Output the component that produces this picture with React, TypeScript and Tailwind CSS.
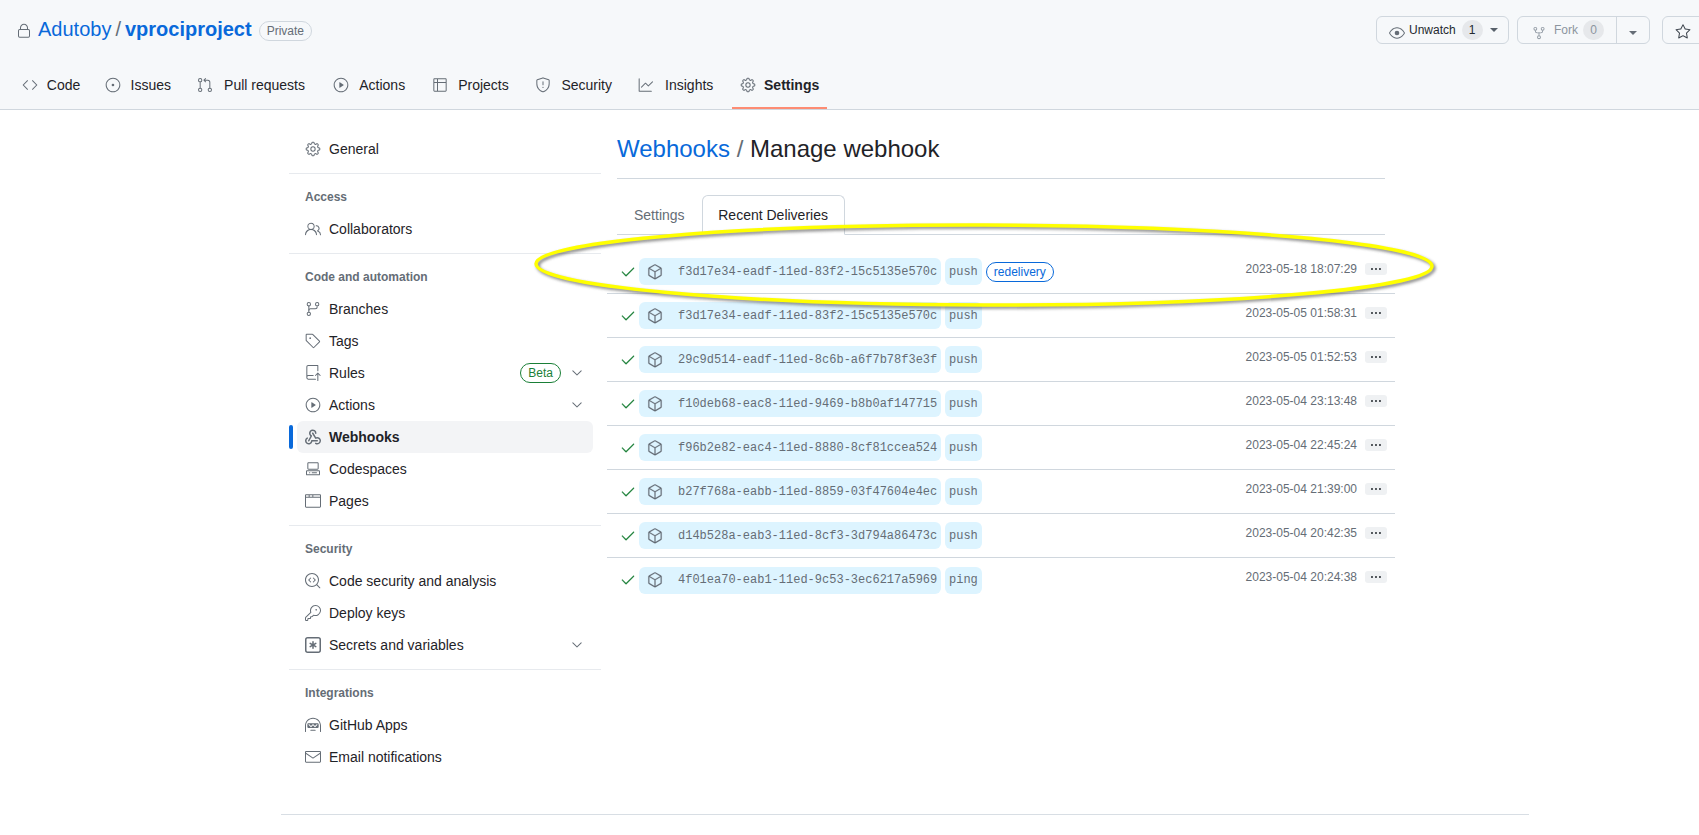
import type { ReactNode } from "react";
import {
  GoBrowser,
  GoCheck,
  GoChevronDown,
  GoCode,
  GoCodescan,
  GoCodespaces,
  GoEye,
  GoGear,
  GoGitBranch,
  GoGitPullRequest,
  GoGraph,
  GoHubot,
  GoIssueOpened,
  GoKebabHorizontal,
  GoKey,
  GoLock,
  GoMail,
  GoPackage,
  GoPeople,
  GoPlay,
  GoRepoForked,
  GoRepoPush,
  GoShield,
  GoStar,
  GoTable,
  GoTag,
} from "react-icons/go";

// these two are missing from the icon package
const WebhookIcon = () => (
  <svg width="16" height="16" viewBox="0 0 16 16" fill="currentColor">
    <path d="M5.5 4.25a2.25 2.25 0 0 1 4.5 0 .75.75 0 0 0 1.5 0 3.75 3.75 0 1 0-6.14 2.889l-2.272 4.258a.75.75 0 0 0 1.324.706L7 7.25a.75.75 0 0 0-.309-1.015A2.25 2.25 0 0 1 5.5 4.25Z" />
    <path d="M7.364 3.607a.75.75 0 0 1 1.03.257l2.608 4.349a3.75 3.75 0 1 1-.628 6.785.75.75 0 0 1 .752-1.299 2.25 2.25 0 1 0-.033-3.88.75.75 0 0 1-1.03-.256L7.107 4.636a.75.75 0 0 1 .257-1.03Z" />
    <path d="M2.9 8.776A.75.75 0 0 1 2.625 9.8 2.25 2.25 0 1 0 6 11.75a.75.75 0 0 1 .75-.751h5.5a.75.75 0 0 1 0 1.5H7.425a3.751 3.751 0 1 1-5.55-3.998.75.75 0 0 1 1.024.274Z" />
  </svg>
);

const KeyAsteriskIcon = () => (
  <svg width="16" height="16" viewBox="0 0 16 16" fill="currentColor">
    <path d="M0 2.75A2.75 2.75 0 0 1 2.75 0h10.5A2.75 2.75 0 0 1 16 2.75v10.5A2.75 2.75 0 0 1 13.25 16H2.75A2.75 2.75 0 0 1 0 13.25ZM2.75 1.5c-.69 0-1.25.56-1.25 1.25v10.5c0 .69.56 1.25 1.25 1.25h10.5c.69 0 1.25-.56 1.25-1.25V2.75c0-.69-.56-1.25-1.25-1.25Z" />
    <path d="M8 4a.75.75 0 0 1 .75.75V6.7l1.69-.975a.75.75 0 0 1 .75 1.3L9.5 8l1.69.976a.75.75 0 0 1-.75 1.298L8.75 9.3v1.951a.75.75 0 0 1-1.5 0V9.299l-1.69.976a.75.75 0 0 1-.75-1.3L6.5 8l-1.69-.975a.75.75 0 0 1 .75-1.3l1.69.976V4.75A.75.75 0 0 1 8 4Z" />
  </svg>
);

const tabs = [
  { label: "Code", icon: <GoCode size={16} /> },
  { label: "Issues", icon: <GoIssueOpened size={16} /> },
  { label: "Pull requests", icon: <GoGitPullRequest size={16} /> },
  { label: "Actions", icon: <GoPlay size={16} /> },
  { label: "Projects", icon: <GoTable size={16} /> },
  { label: "Security", icon: <GoShield size={16} /> },
  { label: "Insights", icon: <GoGraph size={16} /> },
  { label: "Settings", icon: <GoGear size={16} />, active: true },
];

const deliveries = [
  { id: "f3d17e34-eadf-11ed-83f2-15c5135e570c", event: "push", date: "2023-05-18 18:07:29", redelivery: true },
  { id: "f3d17e34-eadf-11ed-83f2-15c5135e570c", event: "push", date: "2023-05-05 01:58:31" },
  { id: "29c9d514-eadf-11ed-8c6b-a6f7b78f3e3f", event: "push", date: "2023-05-05 01:52:53" },
  { id: "f10deb68-eac8-11ed-9469-b8b0af147715", event: "push", date: "2023-05-04 23:13:48" },
  { id: "f96b2e82-eac4-11ed-8880-8cf81ccea524", event: "push", date: "2023-05-04 22:45:24" },
  { id: "b27f768a-eabb-11ed-8859-03f47604e4ec", event: "push", date: "2023-05-04 21:39:00" },
  { id: "d14b528a-eab3-11ed-8cf3-3d794a86473c", event: "push", date: "2023-05-04 20:42:35" },
  { id: "4f01ea70-eab1-11ed-9c53-3ec6217a5969", event: "ping", date: "2023-05-04 20:24:38" },
];

const Caret = ({ gray }: { gray?: boolean }) => (
  <span
    className={
      "inline-block h-0 w-0 border-x-4 border-t-4 border-x-transparent " +
      (gray ? "border-t-[#656d76]" : "border-t-[#57606a]")
    }
  />
);

const SideItem = ({
  icon,
  label,
  active,
  chevron,
  beta,
}: {
  icon: ReactNode;
  label: string;
  active?: boolean;
  chevron?: boolean;
  beta?: boolean;
}) => (
  <div
    className={
      "relative mx-2 flex h-8 items-center rounded-md px-2 text-sm text-[#1f2328] " +
      (active ? "bg-[#f3f4f6] font-bold" : "")
    }
  >
    {active && <span className="absolute -left-2 top-1 h-6 w-1 rounded-md bg-[#0969da]" />}
    <span className="mr-2 flex w-4 justify-center text-[#656d76]">{icon}</span>
    <span>{label}</span>
    {beta && (
      <span className="ml-auto flex h-5 items-center rounded-full border border-[#1a7f37] px-[7px] text-xs text-[#1a7f37]">
        Beta
      </span>
    )}
    {chevron && (
      <span className={(beta ? "ml-2 " : "ml-auto ") + "text-[#656d76]"}>
        <GoChevronDown size={16} />
      </span>
    )}
  </div>
);

const SideHeading = ({ children }: { children: ReactNode }) => (
  <div className="flex h-[39px] items-end pb-2 pl-4 text-xs font-bold text-[#656d76]">{children}</div>
);

const SideDivider = () => <div className="my-2 h-px bg-[#e7eaee]" />;

const Sidebar = () => (
  <aside className="w-[320px] shrink-0 pl-2">
    <SideItem icon={<GoGear size={16} />} label="General" />
    <SideDivider />
    <div className="-mt-2">
      <SideHeading>Access</SideHeading>
      <SideItem icon={<GoPeople size={16} />} label="Collaborators" />
    </div>
    <SideDivider />
    <div className="-mt-2">
      <SideHeading>Code and automation</SideHeading>
      <SideItem icon={<GoGitBranch size={16} />} label="Branches" />
      <SideItem icon={<GoTag size={16} />} label="Tags" />
      <SideItem icon={<GoRepoPush size={16} />} label="Rules" beta chevron />
      <SideItem icon={<GoPlay size={16} />} label="Actions" chevron />
      <SideItem icon={<WebhookIcon />} label="Webhooks" active />
      <SideItem icon={<GoCodespaces size={16} />} label="Codespaces" />
      <SideItem icon={<GoBrowser size={16} />} label="Pages" />
    </div>
    <SideDivider />
    <div className="-mt-2">
      <SideHeading>Security</SideHeading>
      <SideItem icon={<GoCodescan size={16} />} label="Code security and analysis" />
      <SideItem icon={<GoKey size={16} />} label="Deploy keys" />
      <SideItem icon={<KeyAsteriskIcon />} label="Secrets and variables" chevron />
    </div>
    <SideDivider />
    <div className="-mt-2">
      <SideHeading>Integrations</SideHeading>
      <SideItem icon={<GoHubot size={16} />} label="GitHub Apps" />
      <SideItem icon={<GoMail size={16} />} label="Email notifications" />
    </div>
  </aside>
);

const Header = () => (
  <header className="h-[110px] border-b border-[#d0d7de] bg-[#f6f8fa]">
    <div className="flex h-[60px] w-[1730px] items-start pl-4">
      <div className="mt-[21px] flex h-5 items-center text-[#656d76]">
        <GoLock size={16} />
      </div>
      <div className="ml-[6px] mt-[14px] flex items-center text-xl leading-[30px] text-[#0969da]">
        <span>Adutoby</span>
        <span className="mx-1 text-[#656d76]">/</span>
        <span className="font-bold">vprociproject</span>
      </div>
      <span className="ml-[7px] mt-[21px] flex h-5 items-center rounded-full border border-[#d0d7de] px-[7px] text-xs text-[#656d76]">
        Private
      </span>
      <div className="ml-auto mt-4 flex items-start gap-2 text-xs">
        <button className="flex h-7 w-[133px] items-center rounded-md border border-[#d0d7de] bg-[#f6f8fa] pl-3 text-[#24292f]">
          <span className="mt-[6px] text-[#656d76]">
            <GoEye size={16} />
          </span>
          <span className="ml-1">Unwatch</span>
          <span className="ml-[6px] flex h-5 w-[21px] items-center justify-center rounded-full bg-[#e6e8eb]">1</span>
          <span className="ml-[7px] flex">
            <Caret />
          </span>
        </button>
        <div className="flex h-7 w-[133px] rounded-md border border-[#d0d7de] bg-[#f6f8fa] text-[#8c959f]">
          <div className="flex w-[99px] items-center border-r border-[#d0d7de] pl-[14px]">
            <span className="mt-[6px]">
              <GoRepoForked size={14} />
            </span>
            <span className="ml-[8px]">Fork</span>
            <span className="ml-[5px] flex h-5 w-[21px] items-center justify-center rounded-full bg-[#e6e8eb]">0</span>
          </div>
          <div className="flex flex-1 items-center justify-center pt-[6px]">
            <Caret gray />
          </div>
        </div>
        <button className="ml-[4px] flex h-7 w-[68px] items-center rounded-md border border-[#d0d7de] bg-[#f6f8fa] pl-3 text-[#656d76]">
          <span className="mt-[3px] text-[#3d444d]">
            <GoStar size={16} />
          </span>
        </button>
      </div>
    </div>
    <nav className="flex h-[49px] gap-2 pl-[14px]">
      {tabs.map((tab) => (
        <div
          key={tab.label}
          className={
            "flex items-center border-b-2 px-2 pt-[3px] text-sm " +
            (tab.active ? "border-[#fd8c73] font-bold text-[#1f2328]" : "border-transparent text-[#1f2328]")
          }
        >
          <span className="mr-2 text-[#656d76]">{tab.icon}</span>
          <span className="grid text-center">
            <span>{tab.label}</span>
            <span className="invisible h-0 overflow-hidden font-bold">{tab.label}</span>
          </span>
        </div>
      ))}
    </nav>
  </header>
);

const Row = ({ d, last }: { d: (typeof deliveries)[number]; last: boolean }) => (
  <div className={"flex h-11 items-center pl-[13px] pr-2 " + (last ? "" : "border-b border-[#d0d7de]")}>
    <span className="flex w-[16px] justify-center text-[#1a7f37]">
      <GoCheck size={16} stroke="currentColor" strokeWidth={0.4} />
    </span>
    <div className="ml-[3px] flex h-[27px] w-[302px] items-center rounded-md bg-[#ddf4ff] pl-2 font-['Liberation_Mono',monospace] text-xs text-[#656d76]">
      <GoPackage size={16} className="shrink-0" stroke="currentColor" strokeWidth={0.3} />
      <span className="ml-[15px]">{d.id}</span>
    </div>
    <span className="ml-1 flex h-[27px] items-center rounded-md bg-[#ddf4ff] px-1 font-['Liberation_Mono',monospace] text-xs text-[#656d76]">
      {d.event}
    </span>
    {d.redelivery && (
      <span className="ml-1 flex h-5 items-center rounded-full border border-[#0969da] px-[7px] text-xs text-[#0969da]">
        redelivery
      </span>
    )}
    <div className="mb-[6px] ml-auto flex items-center">
      <span className="text-xs text-[#656d76]">{d.date}</span>
      <span className="ml-2 flex h-3 w-[22px] items-center justify-center rounded-[3px] bg-[#eff1f3] text-[#24292f]">
        <GoKebabHorizontal size={12} />
      </span>
    </div>
  </div>
);

const Main = () => (
  <main className="ml-4 mt-px w-[768px] shrink-0">
    <h2 className="border-b border-[#d0d7de] pb-[14px] text-2xl leading-[30px] text-[#1f2328]">
      <span className="text-[#0969da]">Webhooks</span>
      <span className="text-[#656d76]"> / </span>
      Manage webhook
    </h2>
    <div className="mt-4 flex h-[40px] border-b border-[#d0d7de] text-sm">
      <div className="flex h-[39px] items-center pl-[17px] pr-[15px] text-[#656d76]">Settings</div>
      <div className="ml-[2px] flex h-[40px] w-[143px] items-center justify-center rounded-t-md border border-b-white border-[#d0d7de] bg-white pb-px text-[#1f2328]">
        Recent Deliveries
      </div>
    </div>
    <div className="-mx-[10px] mt-[15px]">
      {deliveries.map((d, i) => (
        <Row key={d.date} d={d} last={i === deliveries.length - 1} />
      ))}
    </div>
  </main>
);

export default function App() {
  return (
    <div className="relative h-[835px] w-[1699px] overflow-hidden bg-white font-['Liberation_Sans',Arial,sans-serif]">
      <Header />
      <div className="ml-[281px] w-[1248px]">
        <div className="flex h-[705px] border-b border-[#d8dee4] pt-[23px]">
          <Sidebar />
          <Main />
        </div>
      </div>
      {/* hand-drawn highlight over the first delivery */}
      <svg className="pointer-events-none absolute left-0 top-0" width="1699" height="835">
        <defs>
          <filter id="soft" x="-5%" y="-30%" width="110%" height="160%">
            <feGaussianBlur stdDeviation="1.5" />
          </filter>
        </defs>
        <g transform="rotate(0.15 984 265)">
          <ellipse cx="986" cy="267" rx="448" ry="40" fill="none" stroke="#555" strokeWidth="3.5" opacity="0.7" filter="url(#soft)" />
          <ellipse cx="984" cy="265" rx="448" ry="40" fill="none" stroke="#ffff00" strokeWidth="3.5" />
        </g>
      </svg>
    </div>
  );
}
